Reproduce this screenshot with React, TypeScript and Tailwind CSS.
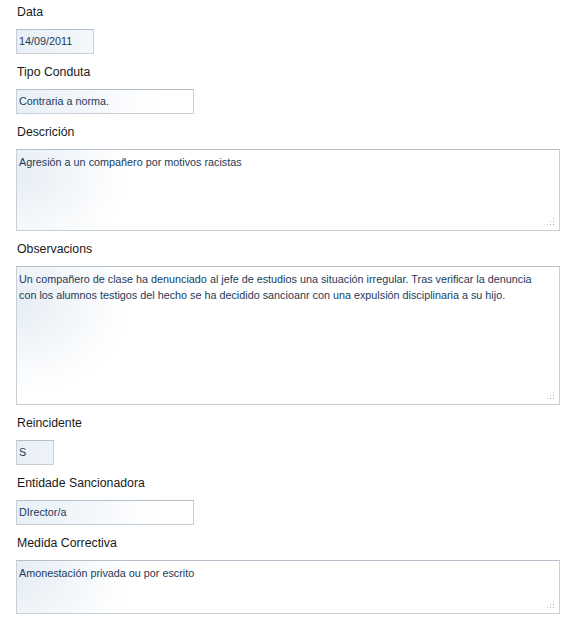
import React from "react";

// Campos da ficha de conduta
const font = { fontFamily: '"Liberation Sans", Arial, sans-serif' };

function Grip() {
  // puntos do redimensionador da textarea
  return (
    <svg
      className="absolute right-[4px] bottom-[4px]"
      width="8"
      height="8"
      viewBox="0 0 8 8"
    >
      <rect x="6" y="0" width="1" height="1" fill="#c4c4c4" />
      <rect x="3" y="3" width="1" height="1" fill="#c4c4c4" />
      <rect x="6" y="3" width="1" height="1" fill="#b0b0b0" />
      <rect x="0" y="6" width="1" height="1" fill="#c4c4c4" />
      <rect x="3" y="6" width="1" height="1" fill="#b0b0b0" />
      <rect x="6" y="6" width="1" height="1" fill="#a8a8a8" />
    </svg>
  );
}

function Label({ children }: { children: React.ReactNode }) {
  return (
    <div className="h-[18px] leading-[18px] text-[12.3px] text-[#1a1a1a] pl-[1px] mb-[8px]">
      {children}
    </div>
  );
}

function Input({ value, w }: { value: string; w: string }) {
  return (
    <div
      className={`${w} h-[25px] border border-[#c7cfd7] border-t-[#b6c0ca] bg-[linear-gradient(to_right,#e8eff6,#ffffff_140px)] px-[2px] leading-[23px] text-[10.8px] text-[#1d3b58] whitespace-nowrap overflow-hidden`}
    >
      {value}
    </div>
  );
}

function Area({ children, h }: { children: React.ReactNode; h: string }) {
  return (
    <div
      className={`relative w-[544px] ${h} border border-[#c7cfd7] border-t-[#b6c0ca] bg-[radial-gradient(ellipse_110px_90px_at_0%_25%,#e6edf4,#ffffff)] px-[2px] pt-[4px] leading-[16px] text-[10.8px] text-[#1d3b58]`}
    >
      {children}
      <Grip />
    </div>
  );
}

export default function App() {
  return (
    <div className="w-[578px] h-[624px] bg-white pt-[3px] pl-[16px]" style={font}>
      <div className="flex flex-col gap-[9px]">
        <div>
          <Label>Data</Label>
          <Input value="14/09/2011" w="w-[78px]" />
        </div>
        <div>
          <Label>Tipo Conduta</Label>
          <Input value="Contraria a norma." w="w-[178px]" />
        </div>
        <div>
          <Label>Descrición</Label>
          <Area h="h-[82px]">Agresión a un compañero por motivos racistas</Area>
        </div>
        <div>
          <Label>Observacions</Label>
          <Area h="h-[139px]">
            Un compañero de clase ha denunciado al jefe de estudios una situación irregular. Tras verificar la denuncia
            <br />
            con los alumnos testigos del hecho se ha decidido sancioanr con una expulsión disciplinaria a su hijo.
          </Area>
        </div>
        <div>
          <Label>Reincidente</Label>
          <Input value="S" w="w-[38px]" />
        </div>
        <div>
          <Label>Entidade Sancionadora</Label>
          <Input value="DIrector/a" w="w-[178px]" />
        </div>
        <div>
          <Label>Medida Correctiva</Label>
          <Area h="h-[54px]">Amonestación privada ou por escrito</Area>
        </div>
      </div>
    </div>
  );
}
